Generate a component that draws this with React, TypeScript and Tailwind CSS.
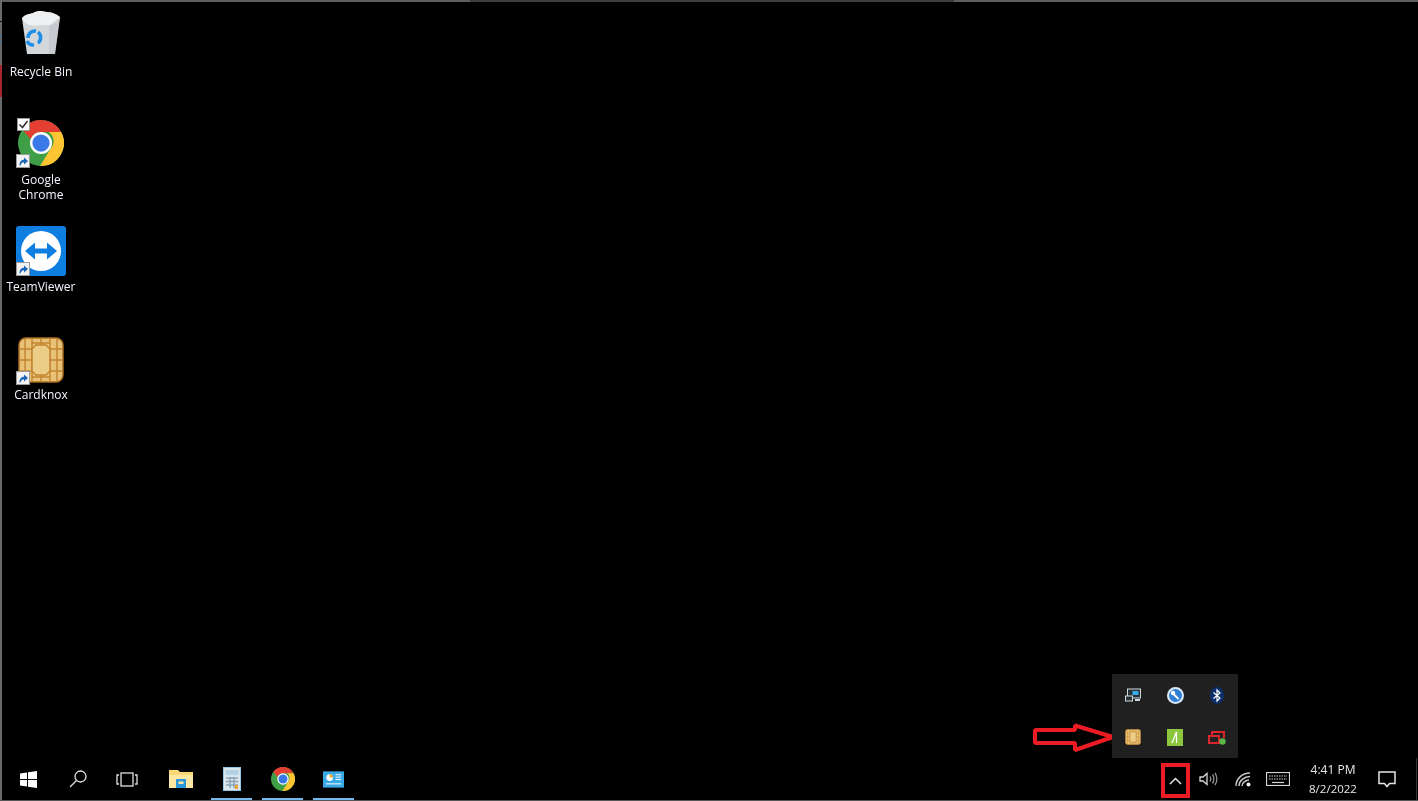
import type { ReactNode } from "react";

function Shortcut({ className }: { className: string }) {
  return (
    <svg width="14" height="14" viewBox="0 0 14 14" className={`absolute ${className}`}>
      <rect x="0.500" y="0.500" width="13" height="13" fill="#f2f2f2" stroke="#9a9a9a" />
      <path d="M3.500 11.500C3.500 7.500 5.500 5.800 8 5.800V3.500L12 7 8 10.500V8.300C6.500 8.300 5 9.300 4.500 11.500Z" fill="#1c66b8" />
    </svg>
  );
}

function ChromeIcon({ size }: { size: number }) {
  return (
    <svg width={size} height={size} viewBox="0 0 48 48">
      <circle cx="24" cy="24" r="24" fill="#3f9f46" />
      <path d="M24 0a24 24 0 0 1 21 12.500H24a11.500 11.500 0 0 0-10.800 7.500L4.500 10A24 24 0 0 1 24 0Z" fill="#e53f33" />
      <path d="M45 12.500A24 24 0 0 1 23 48l11-18a11.500 11.500 0 0 0-2-17.500Z" fill="#fcc531" />
      <circle cx="24" cy="24" r="11.500" fill="#fff" />
      <circle cx="24" cy="24" r="9" fill="#3b78e7" />
    </svg>
  );
}

function ChipIcon({ size }: { size: number }) {
  return (
    <svg width={size} height={size} viewBox="0 0 46 46">
      <rect x="1" y="1" width="44" height="44" rx="7" fill="#e8c277" stroke="#a86a1e" strokeWidth="1.500" />
      <path
        d="M1 12H14M1 23H14M1 34H14M32 12H45M32 23H45M32 34H45M14 1V45M32 1V45M23 1V8M23 38V45M14 6H32M14 40H32M7 1V12M39 1V12M7 34V45M39 34V45M7 12V34M39 12V34"
        stroke="#c2842f"
        strokeWidth="1.400"
        fill="none"
      />
      <path d="M18 8H28L32 12V34L28 38H18L14 34V12Z" fill="#ebcd88" stroke="#c2842f" strokeWidth="1.500" />
    </svg>
  );
}

function DesktopIcon({ label, top, icon }: { label: ReactNode; top: number; icon: ReactNode }) {
  return (
    <div
      className="absolute left-[1px] w-[80px] flex flex-col items-center text-[#f4f4ff] text-center text-[12px] leading-[15px]"
      style={{ top }}
    >
      {icon}
      <span className="mt-[1px]">{label}</span>
    </div>
  );
}

function TrayCell({ children }: { children: ReactNode }) {
  return <div className="flex items-center justify-center h-[42px]">{children}</div>;
}

function TaskButton({ children, active }: { children: ReactNode; active?: boolean }) {
  return (
    <div className="w-[51px] relative flex items-center justify-center">
      {children}
      {active && <div className="absolute bottom-0 left-[5px] right-[5px] h-[2px] bg-[#76b9ed]" />}
    </div>
  );
}

export default function App() {
  return (
    <div className="relative w-[1418px] h-[801px] overflow-hidden bg-black font-['Open_Sans','Liberation_Sans',sans-serif] [filter:blur(0.35px)]">
      {/* Screen edges */}
      <div className="absolute inset-x-0 top-0 h-[2px] bg-[#5e5e5e]">
        <div className="ml-[470px] w-[484px] h-full bg-[#3d3d3d]" />
      </div>
      <div className="absolute inset-y-0 left-0 w-[2px] bg-[#6a6a6a]">
        <div className="absolute top-[21px] w-full h-[1px] bg-[#111]" />
        <div className="absolute top-[36px] w-full h-[1px] bg-[#2a6fc0]" />
        <div className="absolute top-[42px] w-full h-[1px] bg-[#2a6fc0]" />
        <div className="absolute top-[65px] w-full h-[32px] bg-[#a8262c]" />
      </div>
      <div className="absolute inset-x-0 bottom-0 h-[1px] bg-[#555]" />

      {/* Desktop icons */}
      <DesktopIcon
        top={11}
        label="Recycle Bin"
        icon={
          <div className="w-[44px] h-[52px]">
            <svg width="44" height="46" viewBox="0 0 44 46">
              <path d="M3 7L41 6 36 43 8 43Z" fill="#d3d7da" />
              <path d="M3 7C6 3 10 3 14 2 18 -1 24 0 28 1 33 1 38 3 41 6 39 14 30 15 22 14 14 16 5 14 3 7Z" fill="#eff0f1" />
              <path d="M30 15L41 6 36 43 30 43Z" fill="#b9bec2" opacity="0.5" />
              <path
                d="M9 27A7 7 0 0 1 17 20M19 21A7 7 0 0 1 19 32M15 34A7 7 0 0 1 8 30"
                stroke="#1e8ee6"
                strokeWidth="3.500"
                fill="none"
              />
            </svg>
          </div>
        }
      />
      <DesktopIcon
        top={119}
        label={
          <>
            Google
            <br />
            Chrome
          </>
        }
        icon={
          <div className="relative w-[48px] h-[52px] flex items-start justify-center pt-[1px]">
            <ChromeIcon size={46} />
            <div className="absolute left-0 top-[-1px] w-[13px] h-[13px] bg-white border border-[#999] flex items-center justify-center">
              <svg width="11" height="11" viewBox="0 0 11 11">
                <path d="M1.500 5.500L4.500 8.500 9.500 2" stroke="#333" strokeWidth="1.600" fill="none" />
              </svg>
            </div>
            <Shortcut className="left-[-1px] bottom-[3px]" />
          </div>
        }
      />
      <DesktopIcon
        top={226}
        label="TeamViewer"
        icon={
          <div className="relative w-[50px] h-[52px]">
            <svg width="50" height="50" viewBox="0 0 50 50">
              <rect width="50" height="50" rx="3" fill="#0e7fe1" />
              <circle cx="25" cy="25" r="20" fill="#fff" />
              <path d="M9 25L19 16.500V22.500H31V16.500L41 25 31 33.500V27.500H19V33.500Z" fill="#0e7fe1" />
            </svg>
            <Shortcut className="left-0 bottom-[2px]" />
          </div>
        }
      />
      <DesktopIcon
        top={337}
        label="Cardknox"
        icon={
          <div className="relative w-[48px] h-[49px] flex items-start justify-center">
            <ChipIcon size={46} />
            <Shortcut className="left-[-1px] bottom-[1px]" />
          </div>
        }
      />

      {/* Red annotation arrow */}
      <svg width="86" height="32" viewBox="0 0 86 32" className="absolute left-[1033px] top-[722px]">
        <path
          d="M2 8H42V3.500L80 15 42 28V21H2Z"
          fill="none"
          stroke="#ed1c24"
          strokeWidth="4"
          strokeLinejoin="bevel"
        />
        <path d="M78 13L84 15 78 17Z" fill="#ed1c24" />
      </svg>

      {/* Tray overflow flyout */}
      <div className="absolute left-[1112px] top-[674px] w-[126px] h-[84px] bg-[#202020] grid grid-cols-3">
        <TrayCell>
          <svg width="17" height="15" viewBox="0 0 17 15">
            <rect x="2.500" y="1" width="13" height="9" fill="#263238" stroke="#cfd8dc" />
            <rect x="7.500" y="3" width="6" height="4" fill="#3fa9e8" />
            <rect x="0.500" y="8" width="7" height="5" fill="#263238" stroke="#cfd8dc" />
            <rect x="10" y="11" width="5" height="2" fill="#cfd8dc" />
          </svg>
        </TrayCell>
        <TrayCell>
          <svg width="17" height="17" viewBox="0 0 17 17">
            <circle cx="8.500" cy="8.500" r="8.500" fill="#dcebf8" />
            <circle cx="8.500" cy="8.500" r="6.500" fill="#2f7fd6" />
            <path d="M6 6.500L11.500 12" stroke="#fff" strokeWidth="2" />
            <circle cx="6" cy="6" r="2.200" fill="#fff" />
          </svg>
        </TrayCell>
        <TrayCell>
          <svg width="14" height="17" viewBox="0 0 14 17">
            <ellipse cx="7" cy="8.500" rx="7" ry="8.500" fill="#0b2f6b" />
            <path d="M3.500 5.500L10 11 7 14V3L10 6 3.500 11.500" stroke="#fff" strokeWidth="1.200" fill="none" />
          </svg>
        </TrayCell>
        <TrayCell>
          <ChipIcon size={16} />
        </TrayCell>
        <TrayCell>
          <svg width="16" height="17" viewBox="0 0 16 17">
            <rect width="16" height="17" fill="#8cc63f" />
            <path d="M5 14L9.500 3V14" stroke="#fff" strokeWidth="1.300" fill="none" />
          </svg>
        </TrayCell>
        <TrayCell>
          <svg width="18" height="15" viewBox="0 0 18 15">
            <path d="M1 6H11V13H1ZM4 6V2H16V8" fill="none" stroke="#d9252b" strokeWidth="2" />
            <circle cx="14.500" cy="11.500" r="3.200" fill="#5fb548" />
          </svg>
        </TrayCell>
      </div>

      {/* Taskbar */}
      <div className="absolute left-[2px] right-0 bottom-[1px] h-[42px] bg-black flex items-stretch text-white">
        <div className="w-[52px] flex items-center justify-center">
          <svg width="17" height="17" viewBox="0 0 17 17" fill="#fff">
            <path d="M0 2.500L7 1.500V8H0ZM8 1.300L17 0V8H8ZM0 9H7V15.500L0 14.500ZM8 9H17V17L8 15.700Z" />
          </svg>
        </div>
        <div className="w-[48px] flex items-center justify-center">
          <svg width="18" height="18" viewBox="0 0 18 18" fill="none" stroke="#e0e0e0" strokeWidth="1.300">
            <circle cx="11.500" cy="6.500" r="5.500" />
            <path d="M7.500 10.500L1 17" />
          </svg>
        </div>
        <div className="w-[50px] flex items-center justify-center">
          <svg width="22" height="15" viewBox="0 0 22 15" fill="none" stroke="#e0e0e0" strokeWidth="1.300">
            <rect x="5" y="1" width="12" height="13" />
            <path d="M3 3H1V12H3M19 3H21V12H19" />
          </svg>
        </div>

        <div className="flex items-stretch ml-[3px]">
          <TaskButton>
            <svg width="24" height="20" viewBox="0 0 24 20">
              <path d="M0 1H9L11 3H24V19H0Z" fill="#f8d775" />
              <path d="M0 6H24V19H0Z" fill="#fbe6a2" />
              <path d="M7 15V10H17V15H14.500V12.500H9.500V15Z" fill="#2b96d9" />
              <rect x="7" y="15" width="10" height="4" fill="#2b96d9" />
            </svg>
          </TaskButton>
          <TaskButton active>
            <svg width="18" height="24" viewBox="0 0 18 24">
              <rect width="18" height="24" fill="#8fc6e6" />
              <rect x="1" y="1" width="16" height="22" fill="#dbe5ec" />
              <rect x="2.500" y="3" width="13" height="5" fill="#b4d2e6" />
              <path d="M3 11H15M3 14.500H15M3 18H15M7 10V21M11 10V21" stroke="#8aa5b8" strokeWidth="1.500" />
              <rect x="12" y="18" width="3" height="4" fill="#f0a030" />
            </svg>
          </TaskButton>
          <TaskButton active>
            <ChromeIcon size={24} />
          </TaskButton>
          <TaskButton active>
            <svg width="21" height="17" viewBox="0 0 22 17">
              <rect width="22" height="17" fill="#39a9e6" />
              <circle cx="7" cy="6.500" r="3.500" fill="#fff" />
              <path d="M7 6.500V3A3.500 3.500 0 0 1 10.500 6.500Z" fill="#f5a623" />
              <path d="M13 3.500H19M13 6H19M13 8.500H19" stroke="#fff" />
              <path d="M3 13H19" stroke="#bfe4f8" strokeWidth="1.500" />
            </svg>
          </TaskButton>
        </div>

        <div className="flex-1" />

        {/* Highlighted tray chevron */}
        <div className="w-[29px] mt-[5px] mb-[2px] border-[4px] border-[#ed1c24] flex items-center justify-center">
          <svg width="13" height="8" viewBox="0 0 13 8" fill="none" stroke="#e6e6e6" strokeWidth="1.500">
            <path d="M1 7L6.500 1.500 12 7" />
          </svg>
        </div>
        <div className="w-[36px] flex items-center justify-center">
          <svg width="19" height="14" viewBox="0 0 19 14" fill="none" stroke="#d6d6d6" strokeWidth="1.300">
            <path d="M1 5H4L8 1.500V12.500L4 9H1Z" />
            <path d="M11 4.500C12 6 12 8 11 9.500M13.500 2.500C15.300 5 15.300 9 13.500 11.500M16 1C18.500 4.500 18.500 9.500 16 13" stroke="#8e8e8e" />
          </svg>
        </div>
        <div className="w-[34px] flex items-center justify-center">
          <svg width="16" height="15" viewBox="0 0 16 15" fill="none" stroke="#c4c4c4" strokeWidth="1.500">
            <path d="M1 14C1 7 7 1 15 1M4 14C4 9 9 4.500 15 4.500M7 14C7 11 10.500 8 14 8" />
            <circle cx="13.500" cy="12.500" r="2" fill="#eee" stroke="none" />
          </svg>
        </div>
        <div className="w-[36px] flex items-center justify-center">
          <svg width="24" height="14" viewBox="0 0 24 14" fill="none" stroke="#d6d6d6" strokeWidth="1.200">
            <rect x="0.500" y="0.500" width="23" height="13" />
            <path d="M3 4H21M3 7H21" strokeDasharray="1.500 1" />
            <path d="M6 10.500H18" />
          </svg>
        </div>
        <div className="w-[74px] flex flex-col items-center justify-center text-[12px] leading-[19px] text-[#e8e8e8]">
          <span>4:41 PM</span>
          <span className="text-[11.5px]">8/2/2022</span>
        </div>
        <div className="w-[34px] mr-[14px] flex items-center justify-center">
          <svg width="18" height="17" viewBox="0 0 18 17" fill="none" stroke="#e6e6e6" strokeWidth="1.500">
            <path d="M1 1H17V12.500H11.500L9 15.500 6.500 12.500H1Z" />
          </svg>
        </div>
        <div className="absolute right-[1px] inset-y-0 w-[1px] bg-[#333]" />
      </div>
    </div>
  );
}
